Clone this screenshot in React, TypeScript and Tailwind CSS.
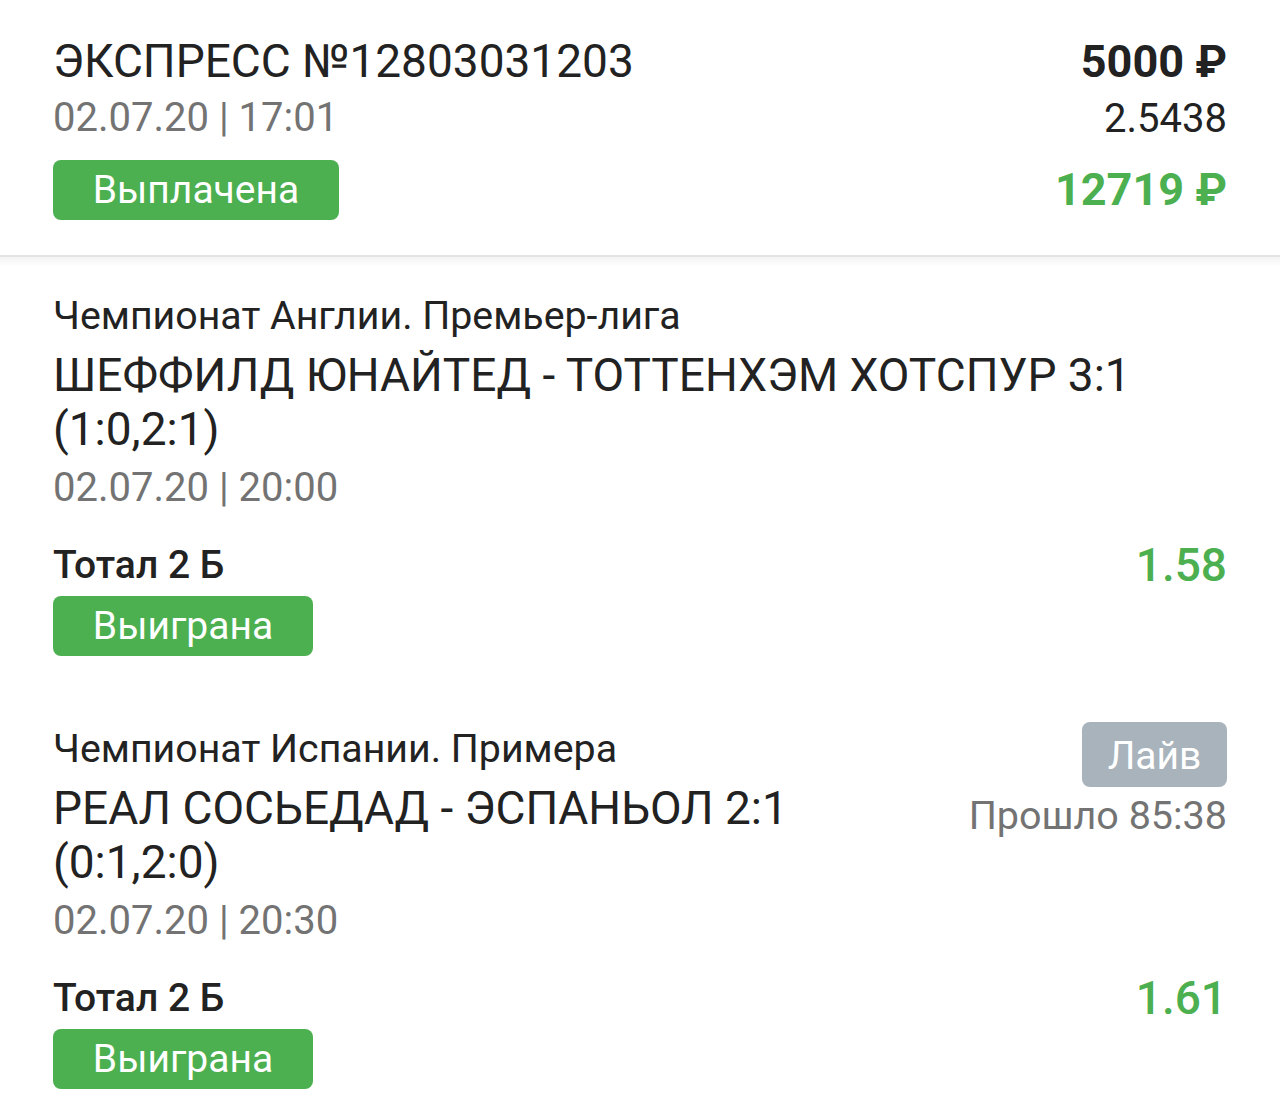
const font = { fontFamily: 'Roboto, "Noto Sans", sans-serif' };

function Badge({ label, className = '' }: { label: string; className?: string }) {
  return (
    <div
      className={`flex h-[60px] items-center justify-center rounded-[8px] bg-[#4caf50] text-[39px] leading-none text-white ${className}`}
    >
      {label}
    </div>
  );
}

interface EventProps {
  league: string;
  title: string;
  score: string;
  date: string;
  market: string;
  odds: string;
  live?: { label: string; elapsed: string };
}

function EventBlock({ league, title, score, date, market, odds, live }: EventProps) {
  return (
    <div className="px-[53px]">
      <div className="flex items-start justify-between">
        <div className={live ? 'pt-[5px]' : ''}>
          <div className="text-[39.3px] leading-[45px] text-[#222]">{league}</div>
          <div className="mt-[9px] text-[46px] leading-[54px] text-[#222]">
            {title}
            <br />
            {score}
          </div>
          <div className="mt-[9px] text-[40px] leading-[45px] text-[#737373]">{date}</div>
        </div>
        {live && (
          <div className="flex flex-col items-end">
            <div className="flex h-[65px] w-[145px] items-center justify-center rounded-[8px] bg-[#a8b3bb] pt-[3px] text-[39px] leading-none text-white">
              {live.label}
            </div>
            <div className="mt-[6px] text-[39.5px] leading-[45px] text-[#737373]">{live.elapsed}</div>
          </div>
        )}
      </div>
      <div className="mt-[32px] flex items-start justify-between">
        <div>
          <div className="text-[39px] font-medium leading-[47px] text-[#222]">{market}</div>
          <Badge label="Выиграна" className="mt-[7px] w-[260px]" />
        </div>
        <div className="-mt-[4px] text-[46px] font-medium leading-[54px] text-[#4caf50]">{odds}</div>
      </div>
    </div>
  );
}

export default function App() {
  return (
    <div className="h-[1108px] w-[1280px] overflow-hidden bg-white" style={font}>
      <div className="flex justify-between px-[53px] pb-[35px] pt-[34px]">
        <div className="flex flex-col items-start">
          <div className="text-[46px] leading-[54px] text-[#222]">ЭКСПРЕСС №12803031203</div>
          <div className="mt-[7px] text-[40px] leading-[45px] text-[#737373]">02.07.20 | 17:01</div>
          <Badge label="Выплачена" className="mt-[20px] w-[286px]" />
        </div>
        <div className="flex flex-col items-end">
          <div className="mt-[2px] text-[45px] font-bold leading-[52px] text-[#222]">5000 ₽</div>
          <div className="mt-[8px] text-[40px] leading-[45px] text-[#222]">2.5438</div>
          <div className="mt-[23px] text-[45px] font-bold leading-[52px] text-[#4caf50]">12719 ₽</div>
        </div>
      </div>
      <div className="h-[2px] bg-[#e4e4e4]" />
      <div className="h-[10px] bg-gradient-to-b from-[#f3f3f3] to-white" />
      <div className="flex flex-col gap-[66px] pt-[27px]">
        <EventBlock
          league="Чемпионат Англии. Премьер-лига"
          title="ШЕФФИЛД ЮНАЙТЕД - ТОТТЕНХЭМ ХОТСПУР 3:1"
          score="(1:0,2:1)"
          date="02.07.20 | 20:00"
          market="Тотал 2 Б"
          odds="1.58"
        />
        <EventBlock
          league="Чемпионат Испании. Примера"
          title="РЕАЛ СОСЬЕДАД - ЭСПАНЬОЛ 2:1"
          score="(0:1,2:0)"
          date="02.07.20 | 20:30"
          market="Тотал 2 Б"
          odds="1.61"
          live={{ label: 'Лайв', elapsed: 'Прошло 85:38' }}
        />
      </div>
    </div>
  );
}
